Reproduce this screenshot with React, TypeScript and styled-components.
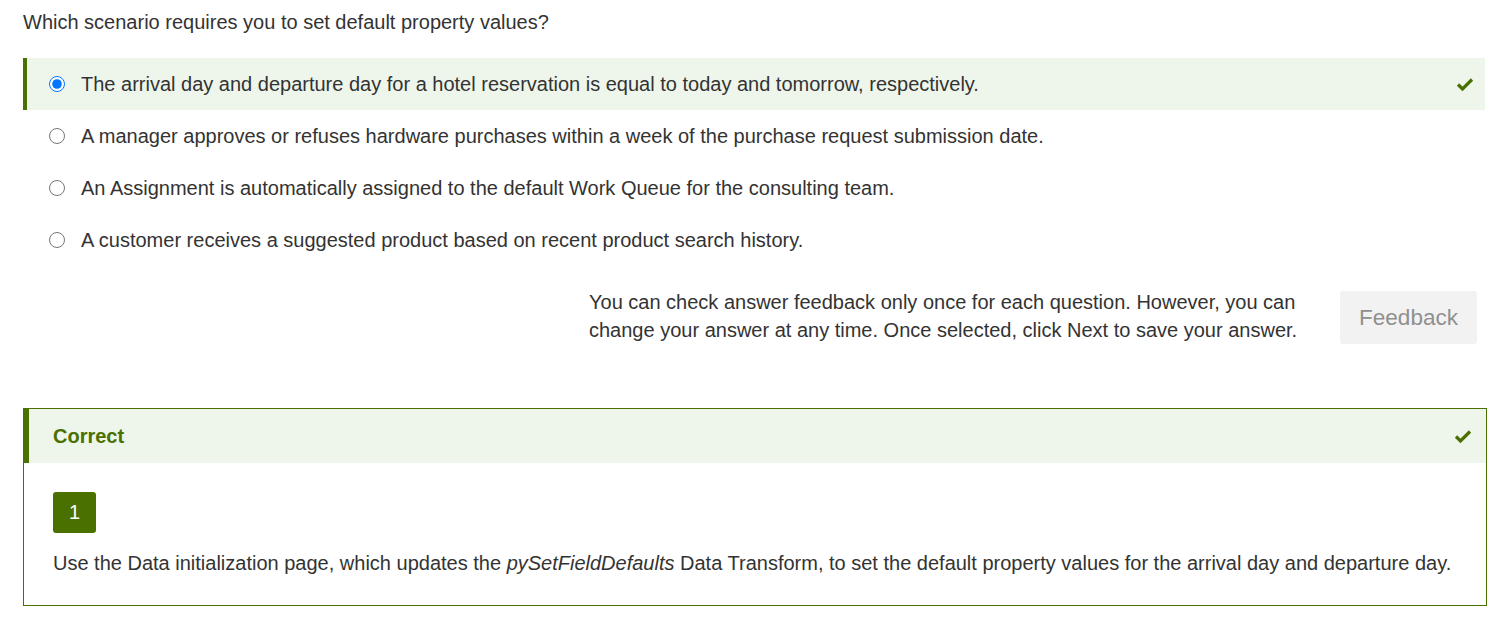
import React from "react";
import styled, { createGlobalStyle } from "styled-components";

const Global = createGlobalStyle`
  html, body { margin: 0; padding: 0; background: #fff; }
  body { font-family: "Liberation Sans", Arial, sans-serif; color: #333; }
`;

const GREEN = "#4a7000";
const LIGHT = "#eef6ec";

const Page = styled.div`
  padding: 10px 10px 0 23px;
  display: flex;
  flex-direction: column;
`;

const Question = styled.div`
  font-size: 20px;
  line-height: 24px;
  height: 24px;
  margin-bottom: 24px;
`;

const Options = styled.div`
  display: flex;
  flex-direction: column;
  margin-right: 2px;
`;

const Option = styled.label<{ $selected?: boolean }>`
  display: flex;
  align-items: center;
  height: 52px;
  padding-left: ${(p) => (p.$selected ? "22px" : "26px")};
  padding-right: 11px;
  border-left: ${(p) => (p.$selected ? `4px solid ${GREEN}` : "none")};
  background: ${(p) => (p.$selected ? LIGHT : "transparent")};
  font-size: 20px;
  gap: 16px;
`;

const Radio = styled.input`
  margin: 0;
  width: 16px;
  height: 16px;
  flex: none;
`;

const OptionText = styled.span`
  flex: 1;
`;

const Check = ({ size = 18 }: { size?: number }) => (
  <svg width={size} height={size} viewBox="0 0 18 18">
    <path d="M2 9.5 L6.5 14 L16 4.5" fill="none" stroke={GREEN} strokeWidth="3.2" />
  </svg>
);

const FeedbackRow = styled.div`
  display: flex;
  justify-content: flex-end;
  align-items: flex-start;
  gap: 32px;
  margin-top: 22px;
  margin-right: 10px;
`;

const Note = styled.div`
  font-size: 20px;
  line-height: 28px;
  width: 719px;
`;

const FeedbackButton = styled.button`
  width: 137px;
  height: 53px;
  margin-top: 3px;
  border: none;
  border-radius: 3px;
  background: #f2f2f2;
  color: #8f8f8f;
  font-family: "Liberation Sans", Arial, sans-serif;
  font-size: 22.5px;
`;

const Panel = styled.div`
  margin-top: 64px;
  border: 1px solid ${GREEN};
`;

const PanelHeader = styled.div`
  display: flex;
  align-items: center;
  height: 54px;
  padding-left: 24px;
  padding-right: 14px;
  border-left: 5px solid ${GREEN};
  background: ${LIGHT};
`;

const PanelTitle = styled.div`
  flex: 1;
  font-size: 20px;
  font-weight: bold;
  color: ${GREEN};
`;

const PanelBody = styled.div`
  padding: 29px 29px 30px 29px;
  display: flex;
  flex-direction: column;
  align-items: flex-start;
`;

const Badge = styled.div`
  width: 43px;
  height: 41px;
  border-radius: 3px;
  background: ${GREEN};
  color: #fff;
  font-size: 20px;
  display: flex;
  align-items: center;
  justify-content: center;
  margin-bottom: 18px;
`;

const Explanation = styled.div`
  font-size: 20px;
  line-height: 24px;
`;

const options = [
  "The arrival day and departure day for a hotel reservation is equal to today and tomorrow, respectively.",
  "A manager approves or refuses hardware purchases within a week of the purchase request submission date.",
  "An Assignment is automatically assigned to the default Work Queue for the consulting team.",
  "A customer receives a suggested product based on recent product search history.",
];

export default function App() {
  return (
    <>
      <Global />
      <Page>
        <Question>Which scenario requires you to set default property values?</Question>
        <Options>
          {options.map((o, i) => (
            <Option key={i} $selected={i === 0}>
              <Radio type="radio" name="q" checked={i === 0} readOnly />
              <OptionText>{o}</OptionText>
              {i === 0 && <Check />}
            </Option>
          ))}
        </Options>
        <FeedbackRow>
          <Note>
            You can check answer feedback only once for each question. However, you can change your
            answer at any time. Once selected, click Next to save your answer.
          </Note>
          <FeedbackButton>Feedback</FeedbackButton>
        </FeedbackRow>
        <Panel>
          <PanelHeader>
            <PanelTitle>Correct</PanelTitle>
            <Check />
          </PanelHeader>
          <PanelBody>
            <Badge>1</Badge>
            <Explanation>
              Use the Data initialization page, which updates the <i>pySetFieldDefaults</i> Data
              Transform, to set the default property values for the arrival day and departure day.
            </Explanation>
          </PanelBody>
        </Panel>
      </Page>
    </>
  );
}
